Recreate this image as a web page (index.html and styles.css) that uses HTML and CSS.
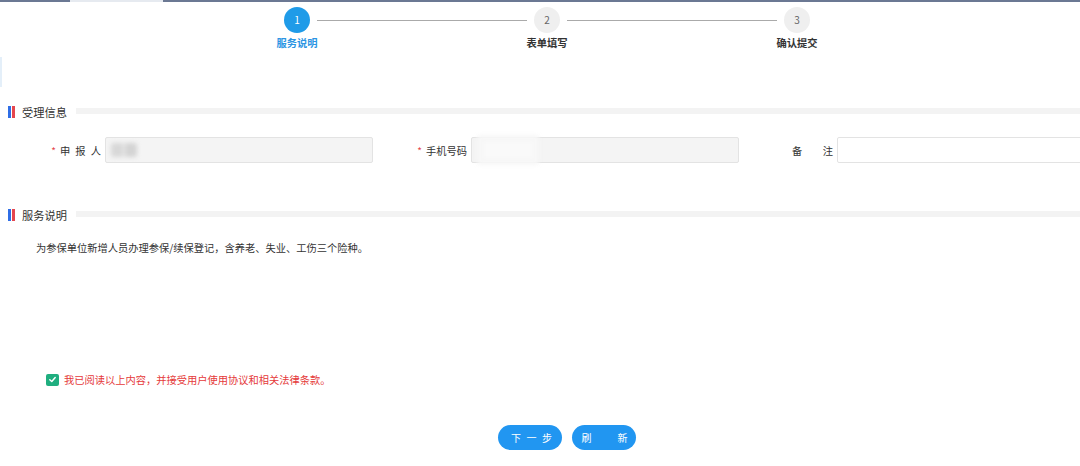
FILE: index.html
```html
<!DOCTYPE html>
<html lang="zh-CN">
<head>
<meta charset="utf-8">
<link rel="stylesheet" href="styles.css">
</head>
<body>
<div class="topbar"><span class="seg dark w70"></span><span class="seg light w93"></span><span class="seg dark grow"></span></div>

<div class="steps">
  <div class="step active"><div class="circle">1</div><div class="slabel">服务说明</div></div>
  <div class="sline"></div>
  <div class="step"><div class="circle">2</div><div class="slabel">表单填写</div></div>
  <div class="sline"></div>
  <div class="step"><div class="circle">3</div><div class="slabel">确认提交</div></div>
</div>

<div class="leftmark"></div>

<div class="section-head first">
  <span class="marker"><i class="b"></i><i class="r"></i></span>
  <span class="title">受理信息</span>
  <span class="band"></span>
</div>

<div class="form-row">
  <div class="field">
    <label class="flabel"><span class="req">*</span><span class="ltext">申报人</span></label>
    <div class="input disabled"><span class="mosaic m1"></span></div>
  </div>
  <div class="field">
    <label class="flabel"><span class="req">*</span><span class="ltext">手机号码</span></label>
    <div class="input disabled"><span class="mosaic m2"></span></div>
  </div>
  <div class="field">
    <label class="flabel"><span class="ltext">备注</span></label>
    <div class="input"></div>
  </div>
</div>

<div class="section-head second">
  <span class="marker"><i class="b"></i><i class="r"></i></span>
  <span class="title">服务说明</span>
  <span class="band"></span>
</div>

<p class="desc">为参保单位新增人员办理参保/续保登记，含养老、失业、工伤三个险种。</p>

<div class="agree">
  <span class="check"><svg width="9" height="9" viewBox="0 0 10 10"><path d="M2 5.2 L4.2 7.3 L8 2.8" fill="none" stroke="#fff" stroke-width="1.6" stroke-linecap="round" stroke-linejoin="round"/></svg></span>
  <span class="agree-text">我已阅读以上内容，并接受用户使用协议和相关法律条款。</span>
</div>

<div class="buttons">
  <button class="btn next"><span>下</span><span>一</span><span>步</span></button>
  <button class="btn refresh"><span>刷</span><span>新</span></button>
</div>
</body>
</html>
```

FILE: styles.css
```css
html, body {
  margin: 0;
  padding: 0;
  background: #fff;
  overflow: hidden;
}
body {
  font-family: "Noto Sans CJK SC", "Noto Sans", sans-serif;
  font-size: 10.25px;
  color: #333;
  width: 1080px;
  height: 466px;
}

.topbar {
  display: flex;
  height: 2px;
}
.seg { display: block; height: 2px; }
.dark { background: #6b7893; }
.light { background: #e6eaf0; }
.w70 { width: 70px; }
.w93 { width: 93px; }
.grow { flex: 1; }

.steps {
  display: flex;
  align-items: flex-start;
  padding-left: 284px;
  margin-top: 5px;
}
.step {
  width: 26px;
  display: flex;
  flex-direction: column;
  align-items: center;
}
.circle {
  width: 26px;
  height: 26px;
  border-radius: 50%;
  background: #efefef;
  color: #666;
  font-size: 10px;
  line-height: 26px;
  text-align: center;
}
.step.active .circle {
  background: #1f9be8;
  color: #fff;
}
.slabel {
  margin: 3px -20px 0;
  width: 66px;
  text-align: center;
  line-height: 14px;
  white-space: nowrap;
  font-weight: bold;
  color: #333;
}
.step.active .slabel { color: #2b95e3; }
.sline {
  width: 210px;
  height: 1px;
  background: #aaa;
  margin: 13px 7px 0;
}

.leftmark {
  width: 2px;
  height: 30px;
  margin-top: 7px;
  background: #e4eff9;
}

.section-head {
  display: flex;
  align-items: center;
  padding-left: 8px;
  height: 14px;
}
.section-head.first { margin-top: 18px; }
.section-head.second { margin-top: 45px; }
.marker {
  display: flex;
  gap: 1px;
}
.marker i {
  display: block;
  width: 3px;
  height: 12px;
}
.marker .b { background: #2f6ee6; }
.marker .r { background: #e5464e; }
.title {
  margin-left: 7px;
  font-size: 11.25px;
  line-height: 14px;
  color: #333;
}
.band {
  flex: 1;
  height: 6px;
  margin-left: 9px;
  margin-top: -2px;
  background: #f3f3f3;
}

.form-row {
  display: grid;
  grid-template-columns: 366px 366px 366px;
  padding-left: 30px;
  margin-top: 18px;
}
.field {
  display: flex;
  align-items: center;
  height: 26px;
}
.flabel {
  width: 75px;
  padding-right: 4px;
  box-sizing: border-box;
  display: flex;
  justify-content: flex-end;
  align-items: center;
  color: #333;
  white-space: nowrap;
}
.req {
  color: #e5464e;
  margin-right: 4px;
  font-size: 10px;
}
.ltext {
  width: 41px;
  white-space: nowrap;
  text-align: justify;
  text-align-last: justify;
}
.input {
  width: 268px;
  height: 26px;
  box-sizing: border-box;
  border: 1px solid #e3e3e3;
  border-radius: 2px;
  background: #fff;
  display: flex;
  align-items: center;
  padding-left: 5px;
}
.input.disabled { background: #f4f4f4; }
.mosaic {
  display: block;
  height: 14px;
  border-radius: 3px;
  filter: blur(2px);
}
.m1 {
  width: 26px;
  background: linear-gradient(90deg, #d8d8d8 0 45%, #ececec 45% 55%, #d4d4d4 55%);
}
.m2 {
  width: 62px;
  height: 30px;
  background: #fafafa;
  box-shadow: inset 0 0 0 7px #f7f7f7;
}

.desc {
  margin: 19px 0 0;
  padding-left: 36px;
  line-height: 14px;
  color: #333;
}

.agree {
  display: flex;
  align-items: center;
  margin-top: 118px;
  padding-left: 46px;
  height: 13px;
}
.check {
  width: 13px;
  height: 12px;
  border-radius: 2px;
  background: #1fae7f;
  display: flex;
  align-items: center;
  justify-content: center;
}
.agree-text {
  margin-left: 5px;
  color: #e53a3a;
  line-height: 14px;
}

.buttons {
  display: flex;
  gap: 10px;
  padding-left: 498px;
  margin-top: 39px;
}
.btn {
  width: 64px;
  height: 25px;
  border: 0;
  border-radius: 13px;
  background: #2196f1;
  color: #fff;
  font-family: "Noto Sans CJK SC", "Noto Sans", sans-serif;
  font-size: 10px;
  padding: 0;
  display: flex;
  align-items: center;
  justify-content: center;
  white-space: nowrap;
}
.btn.next { gap: 5.5px; padding-left: 3px; }
.btn.refresh { gap: 26px; padding-left: 1px; }
```
